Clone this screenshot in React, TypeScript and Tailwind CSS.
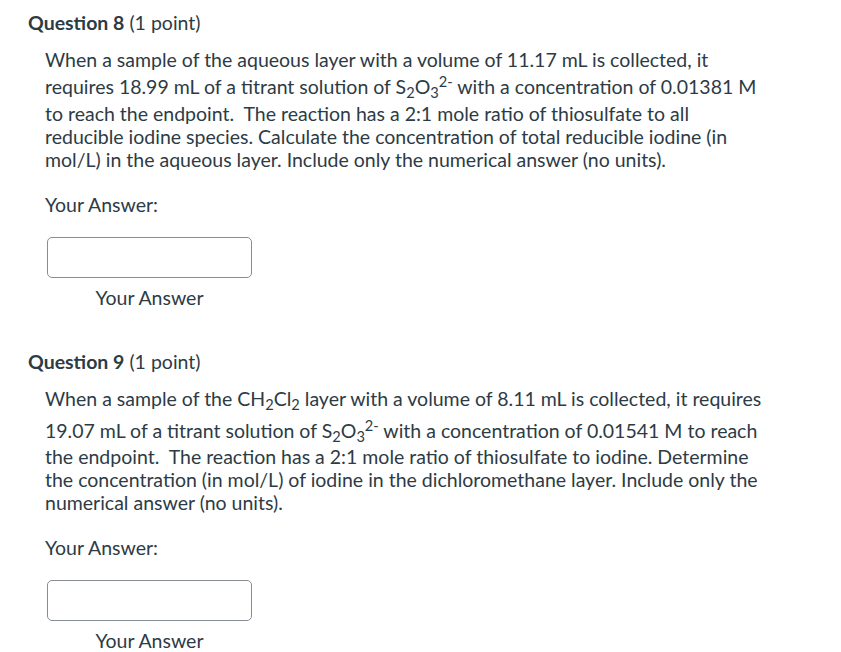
import React from "react";

const Sub = ({ children }: { children: React.ReactNode }) => <sub>{children}</sub>;
const Sup = ({ children }: { children: React.ReactNode }) => <sup>{children}</sup>;

function AnswerBox() {
  return (
    <div className="ml-[2px] mt-[21px] flex w-[205px] flex-col items-center">
      <div className="h-[41px] w-[205px] rounded-[5px] border border-[#888d93] bg-white" />
      <div className="mt-[8px] leading-[23px]">Your Answer</div>
    </div>
  );
}

function Question({
  num,
  children,
}: {
  num: number;
  children: React.ReactNode;
}) {
  return (
    <div>
      <div className="pl-[28px] leading-[23px]">
        <span className="font-bold">Question {num}</span> (1 point)
      </div>
      <div className="pl-[45px]">
        <div className="mt-[14px] leading-[23px] whitespace-nowrap">{children}</div>
        <div className="mt-[22px] leading-[23px]">Your Answer:</div>
        <AnswerBox />
      </div>
    </div>
  );
}

export default function App() {
  return (
    <div
      className="h-[652px] w-[841px] overflow-hidden bg-white pt-[11px] text-[19.5px] text-[#2d3b45]"
      style={{ fontFamily: "Lato, 'Open Sans', sans-serif" }}
    >
      <Question num={8}>
        <div>When a sample of the aqueous layer with a volume of 11.17 mL is collected, it</div>
        <div className="pt-[4px] pb-[4px]">
          requires 18.99 mL of a titrant solution of S<Sub>2</Sub>O<Sub>3</Sub>
          <Sup>2-</Sup> with a concentration of 0.01381 M
        </div>
        <div>to reach the endpoint.&nbsp; The reaction has a 2:1 mole ratio of thiosulfate to all</div>
        <div>reducible iodine species. Calculate the concentration of total reducible iodine (in</div>
        <div>mol/L) in the aqueous layer. Include only the numerical answer (no units).</div>
      </Question>
      <div className="h-[41px]" />
      <Question num={9}>
        <div className="pb-[4px]">
          When a sample of the CH<Sub>2</Sub>Cl<Sub>2</Sub> layer with a volume of 8.11 mL is
          collected, it requires
        </div>
        <div className="pt-[5px] pb-[3px]">
          19.07 mL of a titrant solution of S<Sub>2</Sub>O<Sub>3</Sub>
          <Sup>2-</Sup> with a concentration of 0.01541 M to reach
        </div>
        <div>the endpoint.&nbsp; The reaction has a 2:1 mole ratio of thiosulfate to iodine. Determine</div>
        <div>the concentration (in mol/L) of iodine in the dichloromethane layer. Include only the</div>
        <div>numerical answer (no units).</div>
      </Question>
    </div>
  );
}
